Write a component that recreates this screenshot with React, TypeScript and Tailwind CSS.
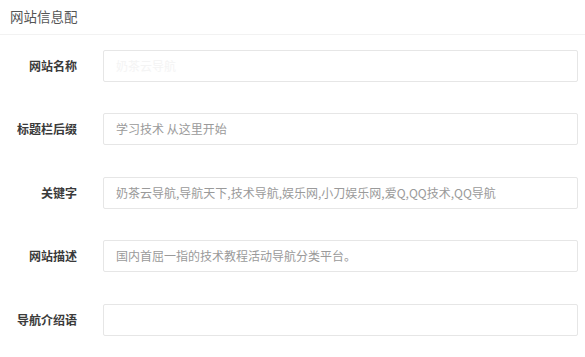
const rows = [
  { label: '网站名称', value: '奶茶云导航', faint: true },
  { label: '标题栏后缀', value: '学习技术 从这里开始' },
  { label: '关键字', value: '奶茶云导航,导航天下,技术导航,娱乐网,小刀娱乐网,爱Q,QQ技术,QQ导航' },
  { label: '网站描述', value: '国内首屈一指的技术教程活动导航分类平台。' },
  { label: '导航介绍语', value: '' },
];

export default function App() {
  return (
    <div
      className="w-[585px] h-[357px] bg-white overflow-hidden"
      style={{ fontFamily: '"Noto Sans CJK SC", "Noto Sans", sans-serif' }}
    >
      <div className="h-[35px] border-b border-[#f2f2f2] pl-[10px] pt-[6px] text-[13.5px] leading-[20px] text-[#555]">
        网站信息配
      </div>
      <div className="flex flex-col gap-[31.5px] pt-[14.5px] pr-[7px]">
        {rows.map((r) => (
          <div key={r.label} className="flex items-center">
            <label className="w-[77px] text-right text-[12px] font-bold text-[#3a3a3a]">{r.label}</label>
            <div className="ml-[26px] flex-1 h-[32px] border border-[#e6e6e6] rounded-[2px] flex items-center pl-[12px] text-[12px]">
              <span className={r.faint ? 'text-[#f4f4f4]' : 'text-[#9a9a9a]'}>{r.value}</span>
            </div>
          </div>
        ))}
      </div>
    </div>
  );
}
